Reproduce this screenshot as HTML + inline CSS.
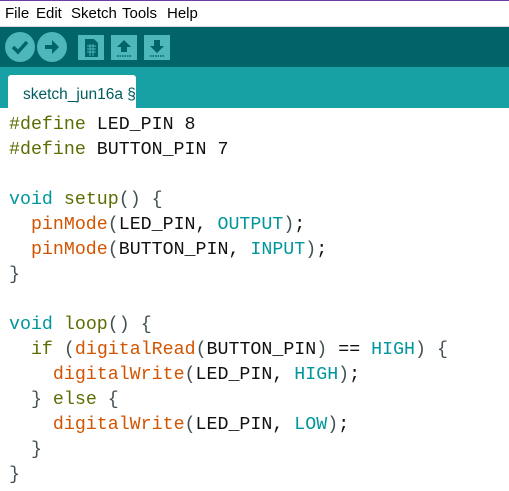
<!DOCTYPE html>
<html><head><style>
body{margin:0;width:509px;height:491px;overflow:hidden;background:#fff;position:relative;font-family:"Liberation Sans",sans-serif}
#top{position:absolute;left:0;top:0;width:509px;height:1px;background:#6a3fa0}
#menu{position:absolute;top:0;left:0;width:509px;height:26px;background:#fff;font-size:15px;color:#000;border-bottom:1px solid #d8d8d8}
#menu span{position:absolute;top:5px}
#tb{position:absolute;top:27px;left:0;width:509px;height:40px;background:#006468}
#tabs{position:absolute;top:67px;left:0;width:509px;height:41px;background:#17a1a5}
#tab{position:absolute;left:8px;top:8px;width:128px;height:33px;background:#fff;border-radius:3px 3px 0 0;color:#005c5f;font-size:15.5px;line-height:40px;text-indent:15px}
.c{position:absolute;top:5px;width:30px;height:30px;border-radius:50%;background:#4db7bb}
.s{position:absolute;top:8px;width:26px;height:25px;background:#4db7bb}
pre{position:absolute;left:9px;top:113px;margin:0;font-family:"Liberation Mono",monospace;font-size:18.3px;line-height:25px;color:#111}
.d{color:#5e6d03}.t{color:#00979c}.o{color:#d35400}.p{color:#434f54}
</style></head><body>
<div id="menu"><span style="left:5px">File</span><span style="left:36px">Edit</span><span style="left:71px">Sketch</span><span style="left:122px">Tools</span><span style="left:167px">Help</span></div>
<div id="top"></div>
<div id="tb">
<div class="c" style="left:5px"><svg width="30" height="30"><path d="M8 15 L13 20 L22 10" stroke="#006468" stroke-width="3.5" fill="none"/></svg></div>
<div class="c" style="left:37px"><svg width="30" height="30"><path d="M8 13h7v-5l7 7-7 7v-5h-7z" fill="#006468"/></svg></div>
<div class="s" style="left:78px"><svg width="26" height="25"><path d="M7 4h9l4 4v14h-13z" fill="#006468"/><path d="M9 11h9M9 14h9M9 17h9M12 9v12M15 9v12" stroke="#4db7bb" stroke-width="1"/></svg></div>
<div class="s" style="left:111px"><svg width="26" height="25"><path d="M13 5l7 7h-4v5h-6v-5h-4z" fill="#006468"/><path d="M6 21h14" stroke="#006468" stroke-dasharray="1.5 1" stroke-width="1.5"/></svg></div>
<div class="s" style="left:144px"><svg width="26" height="25"><path d="M13 18l7-7h-4v-6h-6v6h-4z" fill="#006468"/><path d="M6 21h14" stroke="#006468" stroke-dasharray="1.5 1" stroke-width="1.5"/></svg></div>
</div>
<div id="tabs"><div id="tab">sketch_jun16a §</div></div>
<pre><span class="d">#define</span> LED_PIN 8
<span class="d">#define</span> BUTTON_PIN 7

<span class="t">void</span> <span class="d">setup</span><span class="p">()</span> <span class="p">{</span>
  <span class="o">pinMode</span><span class="p">(</span>LED_PIN, <span class="t">OUTPUT</span><span class="p">)</span>;
  <span class="o">pinMode</span><span class="p">(</span>BUTTON_PIN, <span class="t">INPUT</span><span class="p">)</span>;
<span class="p">}</span>

<span class="t">void</span> <span class="d">loop</span><span class="p">()</span> <span class="p">{</span>
  <span class="d">if</span> <span class="p">(</span><span class="o">digitalRead</span><span class="p">(</span>BUTTON_PIN<span class="p">)</span> == <span class="t">HIGH</span><span class="p">)</span> <span class="p">{</span>
    <span class="o">digitalWrite</span><span class="p">(</span>LED_PIN, <span class="t">HIGH</span><span class="p">)</span>;
  <span class="p">}</span> <span class="d">else</span> <span class="p">{</span>
    <span class="o">digitalWrite</span><span class="p">(</span>LED_PIN, <span class="t">LOW</span><span class="p">)</span>;
  <span class="p">}</span>
<span class="p">}</span></pre>
</body></html>
